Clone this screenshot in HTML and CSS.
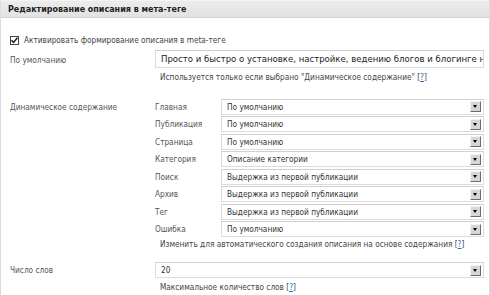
FILE: index.html
```html
<!DOCTYPE html>
<html lang="ru">
<head>
<meta charset="utf-8">
<link rel="stylesheet" href="styles.css">
</head>
<body>
<div class="panel">
  <div class="hd">Редактирование описания в мета-теге</div>
  <div class="bd">
    <div class="chkrow">
      <span class="chk"><svg width="9" height="9" viewBox="0 0 9 9"><path d="M1.5 4.2 L3.5 6.4 L7.5 1.8" fill="none" stroke="#222" stroke-width="1.6"/></svg></span>
      <span>Активировать формирование описания в meta-теге</span>
    </div>

    <div class="row r-default">
      <div class="lbl">По умолчанию</div>
      <div class="field">
        <div class="input">Просто и быстро о установке, настройке, ведению блогов и блогинге на WordPress</div>
        <div class="help">Используется только если выбрано "Динамическое содержание" [<a>?</a>]</div>
      </div>
    </div>

    <div class="row r-dyn">
      <div class="lbl">Динамическое содержание</div>
      <div class="field">
        <div class="grid">
          <div class="sl">Главная</div><div class="sel"><span>По умолчанию</span><i class="btn"></i></div>
          <div class="sl">Публикация</div><div class="sel"><span>По умолчанию</span><i class="btn"></i></div>
          <div class="sl">Страница</div><div class="sel"><span>По умолчанию</span><i class="btn"></i></div>
          <div class="sl">Категория</div><div class="sel"><span>Описание категории</span><i class="btn"></i></div>
          <div class="sl">Поиск</div><div class="sel"><span>Выдержка из первой публикации</span><i class="btn"></i></div>
          <div class="sl">Архив</div><div class="sel"><span>Выдержка из первой публикации</span><i class="btn"></i></div>
          <div class="sl">Тег</div><div class="sel"><span>Выдержка из первой публикации</span><i class="btn"></i></div>
          <div class="sl">Ошибка</div><div class="sel"><span>По умолчанию</span><i class="btn"></i></div>
        </div>
        <div class="help help-dyn">Изменить для автоматического создания описания на основе содержания [<a>?</a>]</div>
      </div>
    </div>

    <div class="row r-words">
      <div class="lbl">Число слов</div>
      <div class="field">
        <div class="sel"><span>20</span><i class="btn"></i></div>
        <div class="help">Максимальное количество слов [<a>?</a>]</div>
      </div>
    </div>
  </div>
</div>
</body>
</html>
```

FILE: styles.css
```css
html, body {
  margin: 0;
  padding: 0;
  background: #fff;
}
body {
  font-family: "DejaVu Sans Condensed", "DejaVu Sans", Verdana, sans-serif;
  font-stretch: condensed;
  font-size: 8.2px;
  color: #555;
}
.panel {
  width: 490px;
  height: 295px;
  box-sizing: border-box;
  border-left: 1px solid #dcdcdc;
  border-right: 1px solid #dcdcdc;
  overflow: hidden;
}
.hd {
  height: 16px;
  line-height: 17px;
  padding-left: 7px;
  background: linear-gradient(#ececec, #e2e2e2);
  border-top: 1px solid #f4f4f4;
  border-bottom: 1px solid #d2d2d2;
  font-family: "DejaVu Sans", Verdana, sans-serif;
  font-stretch: normal;
  font-size: 8px;
  font-weight: bold;
  color: #222;
}
.bd {
  padding: 16px 5px 0 9px;
}
.chkrow {
  display: flex;
  align-items: center;
  gap: 5px;
  height: 12px;
  color: #444;
}
.chk {
  width: 9px;
  height: 9px;
  box-sizing: border-box;
  border: 1px solid #444;
  background: #fff;
  display: flex;
}
.chk svg { display: block; margin: -1px; }
.row {
  display: flex;
}
.lbl {
  width: 145px;
  flex: none;
}
.field {
  flex: 1;
  min-width: 0;
}
.r-default { margin-top: 4px; }
.r-default .lbl { padding-top: 5px; }
.input {
  height: 18px;
  box-sizing: border-box;
  border: 1px solid #dadada;
  border-top-color: #cfcfcf;
  padding: 0 5px;
  line-height: 16px;
  font-size: 9.5px;
  color: #222;
  white-space: nowrap;
  overflow: hidden;
}
.help {
  padding-left: 5px;
  margin-top: 3px;
  height: 12px;
  line-height: 12px;
  color: #444;
  white-space: nowrap;
}
.help-dyn { margin-top: 1px; }
.help a { color: #2a6fb8; text-decoration: underline; }
.r-dyn { margin-top: 15.5px; }
.r-dyn .lbl { padding-top: 3px; }
.grid {
  display: grid;
  grid-template-columns: 66px 1fr;
  row-gap: 1.5px;
}
.sl {
  line-height: 16px;
  color: #555;
}
.sel {
  height: 16px;
  box-sizing: border-box;
  border: 1px solid #dcdcdc;
  border-top-color: #d0d0d0;
  display: flex;
  align-items: center;
  justify-content: space-between;
  padding: 0 2px 0 5px;
  color: #333;
  white-space: nowrap;
}
.btn {
  width: 11px;
  height: 11px;
  box-sizing: border-box;
  background: #d8d6d0;
  border: 1px solid;
  border-color: #f4f4f4 #6c6c6c #6c6c6c #f4f4f4;
  position: relative;
  flex: none;
}
.btn::after {
  content: "";
  position: absolute;
  left: 2px;
  top: 3px;
  border-left: 2.5px solid transparent;
  border-right: 2.5px solid transparent;
  border-top: 3px solid #000;
}
.r-words { margin-top: 12px; }
.r-words .lbl { padding-top: 3px; }
```
